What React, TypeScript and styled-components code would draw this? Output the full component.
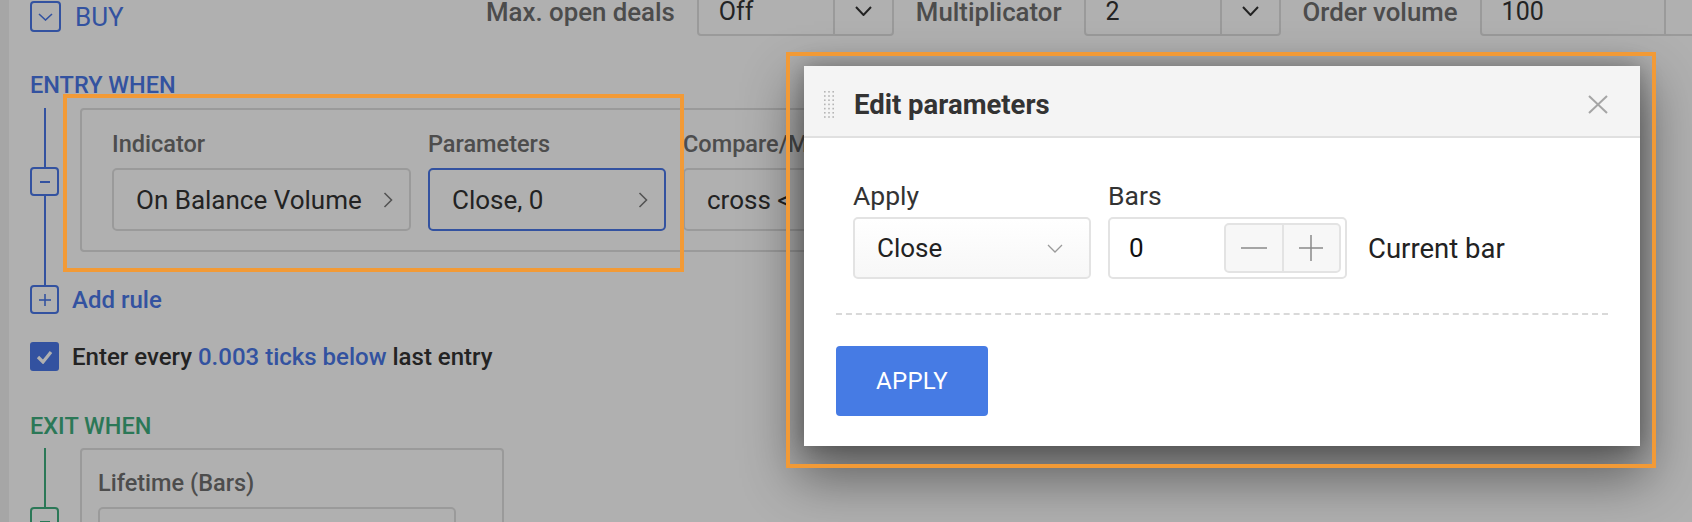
import React from "react";
import styled, { createGlobalStyle } from "styled-components";

const BLUE = "#4a78e8";
const GREEN = "#3fae7e";
const LINE = "#e0e0e0";

const GlobalStyle = createGlobalStyle`
  html, body {
    margin: 0;
    padding: 0;
  }
  body {
    font-family: Roboto, "Liberation Sans", Arial, sans-serif;
    background: #fff;
    overflow: hidden;
  }
`;

const Page = styled.div`
  position: relative;
  width: 1692px;
  height: 522px;
  overflow: hidden;
  display: flex;
  background: #fff;
`;

const Strip = styled.div`
  flex: none;
  width: 9px;
  background: #f1f1f1;
`;

const Main = styled.div`
  flex: 1;
  min-width: 0;
  padding-left: 21px;
  display: flex;
  flex-direction: column;
`;

/* top bar */

const TopBar = styled.div`
  display: flex;
  height: 50px;
  margin-top: -14px;
`;

const BuyToggle = styled.div`
  align-self: flex-end;
  margin: 0 0 4px 0;
  display: flex;
  align-items: center;
  gap: 14px;
  color: ${BLUE};
  font-size: 26px;
`;

const ToggleBox = styled.div<{ $color: string; $size?: number }>`
  width: ${(p) => p.$size ?? 31}px;
  height: ${(p) => p.$size ?? 31}px;
  box-sizing: border-box;
  border: 2px solid ${(p) => p.$color};
  border-radius: 4px;
  display: flex;
  align-items: center;
  justify-content: center;
  background: #fff;
  color: ${(p) => p.$color};
`;

const Controls = styled.div`
  flex: none;
  margin-left: auto;
  width: 1206px;
  display: flex;
  align-items: center;
  gap: 22px;
`;

const BarLabel = styled.div`
  font-size: 25.8px;
  line-height: 22px;
  padding-top: 2px;
  font-weight: 500;
  color: #6e6e6e;
  white-space: nowrap;
`;

const TopSelect = styled.div<{ $w: number }>`
  flex: none;
  width: ${(p) => p.$w}px;
  height: 50px;
  box-sizing: border-box;
  border: 2px solid ${LINE};
  border-radius: 4px;
  display: flex;
`;

const TopValue = styled.div`
  flex: 1;
  display: flex;
  align-items: center;
  padding: 2px 0 0 20px;
  font-size: 25px;
  line-height: 22px;
  color: #333;
`;

const TopArrow = styled.div<{ $w: number }>`
  width: ${(p) => p.$w}px;
  border-left: 2px solid ${LINE};
  display: flex;
  align-items: center;
  justify-content: center;
  color: #333;
`;

/* sections */

const SectionTitle = styled.div<{ $color: string; $gap: number }>`
  margin-top: ${(p) => p.$gap}px;
  font-size: 23.5px;
  line-height: 28px;
  font-weight: 500;
  color: ${(p) => p.$color};
  white-space: nowrap;
`;

const RuleRow = styled.div<{ $gap: number }>`
  margin-top: ${(p) => p.$gap}px;
  display: flex;
  gap: 21px;
`;

const Rail = styled.div`
  flex: none;
  width: 29px;
  display: flex;
  flex-direction: column;
  align-items: center;
`;

const RailLine = styled.div<{ $h: number; $color: string }>`
  width: 2px;
  height: ${(p) => p.$h}px;
  background: ${(p) => p.$color};
`;

const RuleCard = styled.div<{ $w: number }>`
  flex: none;
  align-self: flex-start;
  width: ${(p) => p.$w}px;
  box-sizing: border-box;
  border: 2px solid #dfdfdf;
  border-radius: 4px;
  display: flex;
  gap: 17px;
`;

const EntryCard = styled(RuleCard)`
  height: 144px;
  padding: 20px 0 0 30px;
`;

const ExitCard = styled(RuleCard)`
  height: 140px;
  padding: 19px 0 0 16px;
`;

const Field = styled.div`
  display: flex;
  flex-direction: column;
`;

const FieldLabel = styled.div`
  font-size: 23.5px;
  line-height: 28px;
  font-weight: 500;
  color: #707070;
  margin-bottom: 10px;
  white-space: nowrap;
`;

const FieldButton = styled.div<{ $w: number; $active?: boolean }>`
  width: ${(p) => p.$w}px;
  height: 63px;
  box-sizing: border-box;
  border: 2px solid ${(p) => (p.$active ? BLUE : LINE)};
  border-radius: 5px;
  padding: 0 16px 0 22px;
  display: flex;
  align-items: center;
  justify-content: space-between;
  font-size: 26px;
  color: #333;
  white-space: nowrap;
`;

const ActionRow = styled.div<{ $gap: number }>`
  margin-top: ${(p) => p.$gap}px;
  display: flex;
  align-items: center;
  gap: 13px;
`;

const ActionText = styled.div<{ $color: string }>`
  font-size: 24px;
  font-weight: 500;
  color: ${(p) => p.$color};
  white-space: nowrap;
`;

const CheckBox = styled.div`
  width: 29px;
  height: 29px;
  border-radius: 3px;
  background: ${BLUE};
  display: flex;
  align-items: center;
  justify-content: center;
`;

const Accent = styled.span`
  color: ${BLUE};
`;

/* overlay + modal */

const Overlay = styled.div`
  position: absolute;
  inset: 0;
  background: rgba(0, 0, 0, 0.31);
`;

const Modal = styled.div`
  position: absolute;
  left: 804px;
  top: 66px;
  width: 836px;
  background: #fff;
  box-shadow: 0 24px 50px 8px rgba(0, 0, 0, 0.45), 0 0 20px rgba(0, 0, 0, 0.25);
`;

const ModalHeader = styled.div`
  height: 72px;
  box-sizing: border-box;
  padding: 7px 32px 0 20px;
  border-bottom: 2px solid #e0e0e0;
  background: #f4f4f4;
  display: flex;
  align-items: center;
`;

const ModalTitle = styled.div`
  margin-left: 19px;
  font-size: 27.5px;
  font-weight: 700;
  color: #333;
`;

const CloseButton = styled.div`
  margin-left: auto;
  display: flex;
`;

const ModalBody = styled.div`
  padding: 44px 32px 30px;
`;

const FormRow = styled.div`
  display: flex;
  align-items: flex-end;
  padding-left: 17px;
`;

const FormField = styled.div`
  display: flex;
  flex-direction: column;
  margin-right: 17px;
`;

const FormLabel = styled.div`
  font-size: 26.5px;
  line-height: 28px;
  color: #333;
  margin-bottom: 7px;
`;

const SelectControl = styled.div`
  width: 238px;
  height: 62px;
  box-sizing: border-box;
  border: 2px solid #e3e3e3;
  border-radius: 5px;
  background: linear-gradient(#fff, #f7f7f7);
  padding: 0 26px 0 22px;
  display: flex;
  align-items: center;
  justify-content: space-between;
  font-size: 26px;
  color: #222;
`;

const NumberControl = styled.div`
  width: 239px;
  height: 62px;
  box-sizing: border-box;
  border: 2px solid #e3e3e3;
  border-radius: 5px;
  padding: 0 4px 0 19px;
  display: flex;
  align-items: center;
  font-size: 26px;
  color: #111;
`;

const Stepper = styled.div`
  margin-left: auto;
  width: 117px;
  height: 50px;
  box-sizing: border-box;
  border: 2px solid #e3e3e3;
  border-radius: 5px;
  background: #f7f7f7;
  display: flex;
`;

const StepButton = styled.div<{ $divider?: boolean }>`
  flex: 1;
  display: flex;
  align-items: center;
  justify-content: center;
  border-left: ${(p) => (p.$divider ? "2px solid #e3e3e3" : "none")};
`;

const Hint = styled.div`
  height: 62px;
  margin-left: 4px;
  display: flex;
  align-items: center;
  font-size: 27.5px;
  color: #222;
  white-space: nowrap;
`;

const DashedRule = styled.div`
  margin-top: 34px;
  border-top: 2px dashed #d9d9d9;
`;

const ApplyButton = styled.button`
  margin-top: 31px;
  width: 152px;
  height: 70px;
  border: none;
  border-radius: 4px;
  background: #467be4;
  color: #fff;
  font-family: inherit;
  font-size: 24px;
  letter-spacing: 0.3px;
`;

const Annotation = styled.div<{ $x: number; $y: number; $w: number; $h: number }>`
  position: absolute;
  left: ${(p) => p.$x}px;
  top: ${(p) => p.$y}px;
  width: ${(p) => p.$w}px;
  height: ${(p) => p.$h}px;
  box-sizing: border-box;
  border: 4px solid #f29a36;
  pointer-events: none;
`;

/* icons */

const ChevronDown = ({ w = 17, h = 10, color = "currentColor", sw = 2 }) => (
  <svg width={w} height={h} viewBox={`0 0 ${w} ${h}`} fill="none">
    <polyline points={`1,1 ${w / 2},${h - 1} ${w - 1},1`} stroke={color} strokeWidth={sw} />
  </svg>
);

const ChevronRight = () => (
  <svg width="10" height="16" viewBox="0 0 10 16" fill="none">
    <polyline points="1.5,1 8.5,8 1.5,15" stroke="#7a7a7a" strokeWidth="1.6" />
  </svg>
);

const Minus = ({ color }: { color: string }) => (
  <svg width="12" height="12" viewBox="0 0 12 12">
    <line x1="1" y1="6" x2="11" y2="6" stroke={color} strokeWidth="2" />
  </svg>
);

const Plus = ({ color }: { color: string }) => (
  <svg width="14" height="14" viewBox="0 0 14 14">
    <line x1="1" y1="7" x2="13" y2="7" stroke={color} strokeWidth="1.6" />
    <line x1="7" y1="1" x2="7" y2="13" stroke={color} strokeWidth="1.6" />
  </svg>
);

const Check = () => (
  <svg width="17" height="14" viewBox="0 0 17 14" fill="none">
    <polyline points="2,7 7,12 15,2" stroke="#fff" strokeWidth="3.2" />
  </svg>
);

const DragDots = () => (
  <svg width="11" height="27" viewBox="0 0 11 27">
    {[0, 1, 2].map((c) =>
      [0, 1, 2, 3, 4, 5, 6].map((r) => (
        <rect key={`${c}-${r}`} x={c * 4.2} y={r * 4.2} width="1.6" height="1.6" fill="#b5b5b5" />
      ))
    )}
  </svg>
);

const CloseIcon = () => (
  <svg width="20" height="19" viewBox="0 0 20 19">
    <line x1="1" y1="1" x2="19" y2="18" stroke="#a5a5a5" strokeWidth="2" />
    <line x1="19" y1="1" x2="1" y2="18" stroke="#a5a5a5" strokeWidth="2" />
  </svg>
);

const StepMinus = () => (
  <svg width="26" height="4" viewBox="0 0 26 4">
    <line x1="0" y1="2" x2="26" y2="2" stroke="#8a8a8a" strokeWidth="1.5" />
  </svg>
);

const StepPlus = () => (
  <svg width="24" height="26" viewBox="0 0 24 26">
    <line x1="0" y1="13" x2="24" y2="13" stroke="#8a8a8a" strokeWidth="1.5" />
    <line x1="12" y1="0" x2="12" y2="26" stroke="#8a8a8a" strokeWidth="1.5" />
  </svg>
);

const App: React.FC = () => {
  return (
    <>
      <GlobalStyle />
      <Page>
        <Strip />
        <Main>
          <TopBar>
            <BuyToggle>
              <ToggleBox $color={BLUE}>
                <ChevronDown w={15} h={8} sw={1.6} />
              </ToggleBox>
              BUY
            </BuyToggle>
            <Controls>
              <BarLabel>Max. open deals</BarLabel>
              <TopSelect $w={197}>
                <TopValue>Off</TopValue>
                <TopArrow $w={57}>
                  <ChevronDown />
                </TopArrow>
              </TopSelect>
              <BarLabel>Multiplicator</BarLabel>
              <TopSelect $w={197}>
                <TopValue>2</TopValue>
                <TopArrow $w={57}>
                  <ChevronDown />
                </TopArrow>
              </TopSelect>
              <BarLabel>Order volume</BarLabel>
              <TopSelect $w={250}>
                <TopValue>100</TopValue>
                <TopArrow $w={62} />
              </TopSelect>
            </Controls>
          </TopBar>

          <SectionTitle $color={BLUE} $gap={35}>
            ENTRY WHEN
          </SectionTitle>
          <RuleRow $gap={9}>
            <Rail>
              <RailLine $h={59} $color={BLUE} />
              <ToggleBox $color={BLUE} $size={29}>
                <Minus color={BLUE} />
              </ToggleBox>
              <RailLine $h={89} $color={BLUE} />
            </Rail>
            <EntryCard $w={900}>
              <Field>
                <FieldLabel>Indicator</FieldLabel>
                <FieldButton $w={299}>
                  On Balance Volume
                  <ChevronRight />
                </FieldButton>
              </Field>
              <Field>
                <FieldLabel>Parameters</FieldLabel>
                <FieldButton $w={238} $active>
                  Close, 0
                  <ChevronRight />
                </FieldButton>
              </Field>
              <Field>
                <FieldLabel>Compare/Modify</FieldLabel>
                <FieldButton $w={260}>
                  cross &lt;
                  <ChevronRight />
                </FieldButton>
              </Field>
            </EntryCard>
          </RuleRow>
          <ActionRow $gap={0}>
            <ToggleBox $color={BLUE} $size={29}>
              <Plus color={BLUE} />
            </ToggleBox>
            <ActionText $color={BLUE}>Add rule</ActionText>
          </ActionRow>
          <ActionRow $gap={28}>
            <CheckBox>
              <Check />
            </CheckBox>
            <ActionText $color="#333">
              Enter every <Accent>0.003 ticks below</Accent> last entry
            </ActionText>
          </ActionRow>

          <SectionTitle $color={GREEN} $gap={41}>
            EXIT WHEN
          </SectionTitle>
          <RuleRow $gap={8}>
            <Rail>
              <RailLine $h={59} $color={GREEN} />
              <ToggleBox $color={GREEN} $size={29}>
                <Minus color={GREEN} />
              </ToggleBox>
            </Rail>
            <ExitCard $w={424}>
              <Field>
                <FieldLabel>Lifetime (Bars)</FieldLabel>
                <FieldButton $w={358} />
              </Field>
            </ExitCard>
          </RuleRow>
        </Main>

        <Overlay>
          <Modal>
            <ModalHeader>
              <DragDots />
              <ModalTitle>Edit parameters</ModalTitle>
              <CloseButton>
                <CloseIcon />
              </CloseButton>
            </ModalHeader>
            <ModalBody>
              <FormRow>
                <FormField>
                  <FormLabel>Apply</FormLabel>
                  <SelectControl>
                    Close
                    <ChevronDown w={16} h={9} color="#9a9a9a" sw={1.3} />
                  </SelectControl>
                </FormField>
                <FormField>
                  <FormLabel>Bars</FormLabel>
                  <NumberControl>
                    0
                    <Stepper>
                      <StepButton>
                        <StepMinus />
                      </StepButton>
                      <StepButton $divider>
                        <StepPlus />
                      </StepButton>
                    </Stepper>
                  </NumberControl>
                </FormField>
                <Hint>Current bar</Hint>
              </FormRow>
              <DashedRule />
              <ApplyButton>APPLY</ApplyButton>
            </ModalBody>
          </Modal>
          <Annotation $x={63} $y={94} $w={621} $h={178} />
          <Annotation $x={786} $y={52} $w={870} $h={416} />
        </Overlay>
      </Page>
    </>
  );
};

export default App;
